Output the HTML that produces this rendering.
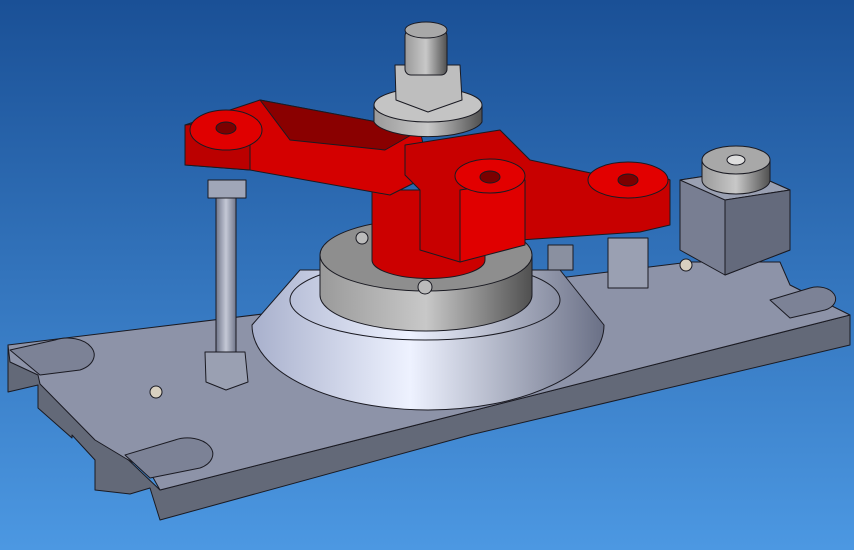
<!DOCTYPE html>
<html><head><style>html,body{margin:0;padding:0;width:854px;height:550px;overflow:hidden}</style></head>
<body>
<svg width="854" height="550" viewBox="0 0 854 550" xmlns="http://www.w3.org/2000/svg">
<defs>
<linearGradient id="bg" x1="0" y1="0" x2="0" y2="1"><stop offset="0" stop-color="#1a5096"/><stop offset="1" stop-color="#4c98e2"/></linearGradient>
<linearGradient id="cone" x1="0" y1="0" x2="1" y2="0"><stop offset="0" stop-color="#a8b0cc"/><stop offset="0.45" stop-color="#eef2ff"/><stop offset="1" stop-color="#6a7086"/></linearGradient>
<linearGradient id="cyl" x1="0" y1="0" x2="1" y2="0"><stop offset="0" stop-color="#9a9a9a"/><stop offset="0.5" stop-color="#c8c8c8"/><stop offset="1" stop-color="#505050"/></linearGradient>
<linearGradient id="rod" x1="0" y1="0" x2="1" y2="0"><stop offset="0" stop-color="#70768a"/><stop offset="0.5" stop-color="#c4c8d6"/><stop offset="1" stop-color="#70768a"/></linearGradient>
</defs>
<rect width="854" height="550" fill="url(#bg)"/>
<g stroke="#1a1a22" stroke-width="1" stroke-linejoin="round">
<!-- plate front faces -->
<polygon points="8,345 8,392 38,385 38,408 72,438 72,435 95,460 95,490 130,494 150,488 160,520 470,435 850,345 850,315 160,490" fill="#636978"/>
<!-- plate top -->
<polygon points="8,345 690,262 780,262 790,285 850,315 160,490 150,472 125,458 95,440 40,384 38,375 10,362" fill="#8d93a8"/>
<!-- slots -->
<path d="M10,350 L55,340 A22,14 0 0 1 80,370 L40,375 Z" fill="#7c8296"/>
<path d="M125,455 L175,440 A22,14 0 0 1 200,468 L150,478 Z" fill="#7c8296"/>
<path d="M770,300 L810,288 A18,12 0 0 1 825,310 L790,318 Z" fill="#7c8296"/>
<!-- cone -->
<path d="M252,325 A176,85 0 0 0 604,325 L560,270 L300,270 Z" fill="url(#cone)"/>
<ellipse cx="425" cy="300" rx="135" ry="40" fill="none"/>
<!-- disk -->
<path d="M320,255 L320,295 A106,36 0 0 0 532,295 L532,255 Z" fill="url(#cyl)"/>
<ellipse cx="426" cy="255" rx="106" ry="36" fill="#8e8e8e"/>
<circle cx="425" cy="287" r="7" fill="#bbb"/>
<circle cx="362" cy="238" r="6" fill="#bbb"/>
<!-- rod -->
<rect x="216" y="180" width="20" height="175" fill="url(#rod)"/>
<polygon points="205,352 245,352 248,382 226,390 206,382" fill="#9aa0b2"/>
<polygon points="208,180 246,180 246,198 208,198" fill="#a0a6b8"/>
<circle cx="156" cy="392" r="6" fill="#d8d0c0"/>
<circle cx="686" cy="265" r="6" fill="#d8d0c0"/>
<!-- right post & nut -->
<rect x="548" y="245" width="25" height="25" fill="#8a90a0"/>
<rect x="608" y="238" width="40" height="50" fill="#9aa0b2"/>
<!-- block -->
<polygon points="680,180 745,170 790,190 790,250 725,275 680,250" fill="#787e92"/>
<polygon points="680,180 745,170 790,190 725,200" fill="#9aa0b2"/>
<polygon points="725,200 790,190 790,250 725,275" fill="#646a7c"/>
<path d="M702,160 L702,180 A34,14 0 0 0 770,180 L770,160 Z" fill="url(#cyl)"/>
<ellipse cx="736" cy="160" rx="34" ry="14" fill="#a8a8a8"/>
<ellipse cx="736" cy="160" rx="9" ry="5" fill="#ddd"/>
<!-- red clamp -->
<path d="M372,190 L372,260 A55,18 0 0 0 485,260 L485,190 Z" fill="#cc0000"/>
<polygon points="185,125 260,100 420,130 430,175 390,195 250,170 185,165" fill="#d40000"/>
<polygon points="260,100 420,130 385,150 290,140" fill="#8a0000"/>
<polygon points="185,125 250,120 250,170 185,165" fill="#bb0000"/>
<ellipse cx="226" cy="130" rx="36" ry="20" fill="#e00000"/>
<ellipse cx="226" cy="128" rx="10" ry="6" fill="#7a0000"/>
<polygon points="405,145 500,130 530,160 600,175 640,165 670,180 670,225 640,232 520,240 460,262 420,250 420,190 405,175" fill="#c80000"/>
<polygon points="460,190 525,180 525,245 460,262" fill="#e00000"/>
<ellipse cx="490" cy="176" rx="35" ry="17" fill="#e20000"/>
<ellipse cx="490" cy="177" rx="10" ry="6" fill="#7a0000"/>
<ellipse cx="628" cy="180" rx="40" ry="18" fill="#e20000"/>
<ellipse cx="628" cy="180" rx="10" ry="6" fill="#7a0000"/>
<!-- washer, nut, stud -->
<path d="M374,105 L374,122 A55,18 0 0 0 482,122 L482,105 Z" fill="url(#cyl)"/>
<ellipse cx="428" cy="105" rx="54" ry="17" fill="#c4c4c4"/>
<polygon points="395,65 460,65 462,100 428,112 396,100" fill="#bebebe"/>
<rect x="405" y="30" width="42" height="45" rx="6" fill="url(#cyl)"/>
<ellipse cx="426" cy="30" rx="21" ry="8" fill="#a8a8a8"/>
</g>
</svg>
</body></html>
